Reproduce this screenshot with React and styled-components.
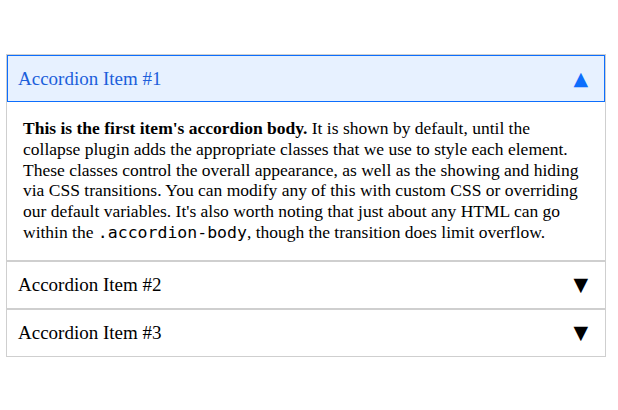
import React, { useState } from 'react';
import styled, { createGlobalStyle } from 'styled-components';

const colors = {
  border: '#cfcfcf',
  activeBg: '#e7f1ff',
  activeText: '#1c5fdb',
  activeBorder: '#0d6efd',
  text: '#000'
};

const GlobalStyle = createGlobalStyle`
  html, body {
    margin: 0;
    padding: 0;
    background: #fff;
  }
  body {
    font-family: "Liberation Serif", "Times New Roman", serif;
    color: ${colors.text};
  }
`;

const items = [
  { id: 1, title: 'Accordion Item #1' },
  { id: 2, title: 'Accordion Item #2' },
  { id: 3, title: 'Accordion Item #3' }
];

const App = () => {
  const [open, setOpen] = useState(1);

  return (
    <Page>
      <GlobalStyle />
      <Accordion>
        {items.map((item) => {
          const isOpen = open === item.id;
          return (
            <Item key={item.id}>
              <Header active={isOpen} onClick={() => setOpen(isOpen ? null : item.id)}>
                <span>{item.title}</span>
                <Arrow active={isOpen}>{isOpen ? '▲' : '▼'}</Arrow>
              </Header>
              {isOpen && (
                <Body>
                  <strong>This is the first item's accordion body.</strong> It is shown by
                  default, until the collapse plugin adds the appropriate classes that we use
                  to style each element. These classes control the overall appearance, as well
                  as the showing and hiding via CSS transitions. You can modify any of this with
                  custom CSS or overriding our default variables. It's also worth noting that
                  just about any HTML can go within the <Code>.accordion-body</Code>, though the
                  transition does limit overflow.
                </Body>
              )}
            </Item>
          );
        })}
      </Accordion>
    </Page>
  );
};

const Page = styled.div`
  padding: 54px 0 0 6px;
`;

const Accordion = styled.div`
  width: 600px;
  display: flex;
  flex-direction: column;
`;

const Item = styled.div`
  border: 1px solid ${colors.border};
`;

const Header = styled.button`
  display: flex;
  align-items: center;
  justify-content: space-between;
  width: 100%;
  height: ${props => (props.active ? '47px' : '46px')};
  margin: 0;
  padding: 0 16px 0 10px;
  box-sizing: border-box;
  border: 1px solid ${props => (props.active ? colors.activeBorder : 'transparent')};
  background: ${props => (props.active ? colors.activeBg : '#fff')};
  color: ${props => (props.active ? colors.activeText : colors.text)};
  font-family: "Liberation Serif", "Times New Roman", serif;
  font-size: 19px;
  text-align: left;
  cursor: pointer;
`;

const Arrow = styled.span`
  font-family: "DejaVu Sans", sans-serif;
  font-size: 19px;
  line-height: 1;
  color: ${props => (props.active ? colors.activeBorder : colors.text)};
`;

const Body = styled.div`
  padding: 16px 20px 16px 16px;
  font-size: 17.5px;
  line-height: 20.8px;
`;

const Code = styled.code`
  font-family: "DejaVu Sans Mono", monospace;
  font-size: 16.5px;
`;

export default App;
